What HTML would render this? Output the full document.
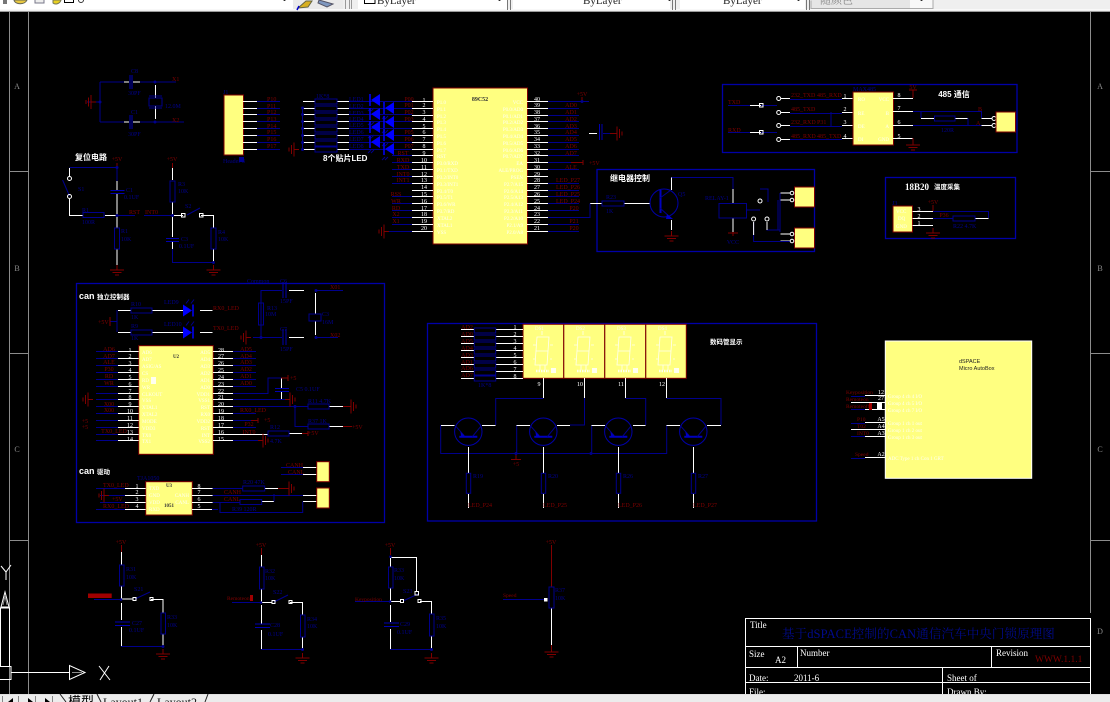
<!DOCTYPE html>
<html lang="zh">
<head>
<meta charset="utf-8">
<title>基于dSPACE控制的CAN通信汽车中央门锁原理图</title>
<style>
html,body{margin:0;padding:0;background:#000;width:1110px;height:702px;overflow:hidden}
svg{display:block}
text{font-family:"Liberation Serif","Noto Serif CJK SC",serif;font-size:6px}
.w{stroke:#fff;fill:none;stroke-width:1}
.b{stroke:#00008c;fill:none;stroke-width:1}
.r{stroke:#800000;fill:none;stroke-width:1}
.g{stroke:#8c8c8c;fill:none;stroke-width:1}
.f{stroke:#fff;fill:none;stroke-width:1}
.box{stroke:#0000a8;fill:none;stroke-width:1.3}
.y{fill:#ffff80;stroke:#800000;stroke-width:1}
.tr{fill:#800000}
.tb{fill:#00008c}
.tw{fill:#fff}
.tp{fill:#fffff0;font-size:5px}
.h{fill:#fff;font-size:8px;font-weight:bold;font-family:"Liberation Sans","Noto Sans CJK SC",sans-serif}
.n{fill:#fff;font-size:6px;text-anchor:middle}
.m{text-anchor:middle}
.e{text-anchor:end}
.tt{fill:#fff;font-size:9px}
.ui{fill:#222;font-size:11px}
</style>
</head>
<body>
<svg xmlns="http://www.w3.org/2000/svg" width="1110" height="702" viewBox="0 0 1110 702">
<defs>
<g id="gd"><path class="r" d="M0 -5V0M-7 0H7M-4.5 2.5H4.5M-2 5H2"/></g>
<g id="gl"><path class="r" d="M5 0H0M0 -7V7M-2.5 -4.5V4.5M-5 -2V2"/></g>
<g id="gr"><path class="r" d="M-5 0H0M0 -7V7M2.5 -4.5V4.5M5 -2V2"/></g>
<g id="rh"><rect x="0" y="-2.5" width="21" height="5" class="b" stroke-width="1.5"/></g>
<g id="rv"><rect x="-2.5" y="0" width="5" height="21" class="b"/></g>
<g id="led"><path d="M9 -6V6L0 0Z" fill="#0000ff"/><path d="M-1 -6V6" stroke="#0000ff" fill="none" stroke-width="1.5"/><path d="M0 8L-3 11M3 8L0 11" class="b"/></g>
<g id="led2"><path d="M0 -6V6L9 0Z" fill="#0000ff"/><path d="M10 -6V6" stroke="#0000ff" fill="none" stroke-width="1.5"/><path d="M3 -7L6 -11M8 -7L11 -11" class="b"/></g>
<g id="npn"><circle cx="0" cy="0" r="13.7" stroke="#0000a8" fill="none"/><path d="M-9 5H9" stroke="#0000c0" stroke-width="2"/><path class="b" d="M13 -6L4 5M-13 -6L-4 4"/><path d="M-8 0L-3 5L-7 5Z" fill="#0000c0"/></g>
<g id="dig"><path stroke="#fffff0" fill="none" stroke-width=".8" d="M4 12H16L15 26H3ZM3 26H15L14 40H2ZM9 6V10M0 20H3M17 20H20M0 34H2M17 34H19M7 40V45M12 40V45"/><rect x="28" y="44" width="5" height="5" fill="#fffff0" transform="translate(-10 -1)"/><path d="M3 46H16" stroke="#fffff0" stroke-width="2.5" stroke-dasharray="1.5 1"/></g>
</defs>

<rect width="1110" height="702" fill="#000"/>

<!-- top toolbar -->
<rect x="0" y="0" width="1110" height="12" fill="#efefef"/>
<rect x="0" y="0" width="293" height="9" fill="#fff"/>
<rect x="358" y="0" width="149" height="9" fill="#fff"/>
<rect x="513" y="0" width="157" height="9" fill="#fff"/>
<rect x="680" y="0" width="125" height="9" fill="#fff"/>
<rect x="811" y="0" width="99" height="8" fill="#e6e6e6"/>
<rect x="910" y="0" width="23" height="8" fill="#f8f8f8"/>
<path d="M811 .5V8.5H933V0" stroke="#aaa" fill="none"/>
<path d="M0 9.5H1110" stroke="#f8f8f8"/>
<path d="M0 11.5H1110" stroke="#9a9a9a"/>
<rect x="3" y="0" width="4" height="4" fill="#777"/>
<path d="M14 0C15 5 25 5 27 0Z" fill="#e8c840" stroke="#665"/>
<path d="M35 0V3H44V0" fill="#eee" stroke="#778"/>
<path d="M53 0V3C55 5 60 4 61 0Z" fill="#e8d020" stroke="#775"/>
<path d="M64.500 0V2.500H73.500V0" fill="#fff" stroke="#000"/>
<circle cx="81" cy="0" r="2.500" fill="none" stroke="#333"/>
<path d="M283 0H286L284.500 1Z" fill="#000"/>
<rect x="293" y="0" width="50" height="9" fill="#eaeaea"/>
<path d="M298 8L306 1H312L308 7Z" fill="#d8b020" stroke="#664"/>
<path d="M297 10L299 6" stroke="#00c" stroke-width="1.500"/>
<path d="M319 0L333 4L327 7L318 3Z" fill="#7e98c0" stroke="#556"/>
<path d="M345.500 0V9M349.500 0V9M351.500 0V9" stroke="#999"/>
<path d="M507.500 0V10M510.500 0V10M672.500 0V10M675.500 0V10M806.500 0V10M809.500 0V10" stroke="#777"/>
<path d="M364.500 0V3.500H375V0" fill="#fff" stroke="#000"/>
<text x="377" y="4" class="ui">ByLayer</text>
<text x="583" y="4" class="ui">ByLayer</text>
<text x="723" y="4" class="ui">ByLayer</text>
<text x="820" y="3.500" class="ui" fill="#777" style="fill:#888">随颜色</text>
<path d="M498 0H501L499.500 1ZM668 0H671L669.500 1ZM797 0H800L798.500 1ZM920 0H923L921.500 1Z" fill="#000"/>

<!-- drawing frame -->
<path class="g" d="M9.500 12V694M28.500 12V694M1090.500 12V613M9 171.500H28M9 353.500H28M9 540.500H28M1090 171.500H1110M1090 353.500H1110M1090 540.500H1110"/>
<g fill="#8c8c8c" style="font-size:8px">
<text x="17" y="89" class="m" fill="#8c8c8c" style="font-size:8px">A</text>
<text x="17" y="271" class="m" fill="#8c8c8c" style="font-size:8px">B</text>
<text x="17" y="452" class="m" fill="#8c8c8c" style="font-size:8px">C</text>
<text x="1100" y="89" class="m" fill="#8c8c8c" style="font-size:8px">A</text>
<text x="1100" y="271" class="m" fill="#8c8c8c" style="font-size:8px">B</text>
<text x="1100" y="452" class="m" fill="#8c8c8c" style="font-size:8px">C</text>
<text x="1100" y="634" class="m" fill="#8c8c8c" style="font-size:8px">D</text>
</g>

<!-- crystal section -->
<path class="b" d="M100 82V122M87 102H100M100 82H127M100 122H127M137 82H176M137 122H184"/>
<path class="w" d="M124 82H129M133 82H140M124 122H129M133 122H140M155.500 85V98M155.500 106V119"/>
<path d="M130 75V89M132 75V89M130 115V129M132 115V129" stroke="#0000b0" fill="none"/>
<rect x="149" y="98" width="13" height="8" class="b"/><path class="b" d="M149 96H162M149 108H162"/>
<circle cx="155" cy="82" r="1.500" fill="#00008c"/><circle cx="155" cy="122" r="1.500" fill="#00008c"/><circle cx="100" cy="102" r="1.500" fill="#00008c"/>
<use href="#gl" x="91" y="102"/>
<text x="172" y="81" class="tr">X1</text><text x="172" y="122" class="tr">X2</text>
<text x="131" y="73" class="tb">C8</text><text x="128" y="95" class="tb">30PF</text>
<text x="131" y="114" class="tb">C1</text><text x="128" y="136" class="tb">30PF</text>
<text x="165" y="108" class="tb">12.0M</text>

<!-- header -->
<rect x="224" y="95" width="19.500" height="60" class="y" stroke-width="1.400"/>
<path class="w" d="M243 101.500H257M243 108.500H257M243 114.500H257M243 121.500H257M243 128.500H257M243 135.500H257M243 142.500H257M243 149.500H257"/>
<path class="b" d="M257 101.500H280M257 108.500H280M257 114.500H280M257 121.500H280M257 128.500H280M257 135.500H280M257 142.500H280M257 149.500H280"/>
<g class="tr"><text x="267" y="101" class="tr">P10</text><text x="267" y="108" class="tr">P11</text><text x="267" y="114" class="tr">P12</text><text x="267" y="121" class="tr">P13</text><text x="267" y="128" class="tr">P14</text><text x="267" y="134" class="tr">P15</text><text x="267" y="141" class="tr">P16</text><text x="267" y="148" class="tr">P17</text></g>
<text x="223" y="94" class="tb">J1</text><text x="223" y="163" class="tb">Header 8</text>
<rect x="239" y="157" width="5" height="5" fill="#00008c"/>

<!-- resistor array / LEDs -->
<path class="w" d="M303 101.500H315M303 108.500H315M303 114.500H315M303 121.500H315M303 128.500H315M303 135.500H315M303 142.500H315M303 149.500H315M337 101.500H349M337 108.500H349M337 114.500H349M337 121.500H349M337 128.500H349M337 135.500H349M337 142.500H349M337 149.500H349"/>
<g class="b"><rect x="315" y="99" width="22" height="5" class="b"/><rect x="315" y="106" width="22" height="5" class="b"/><rect x="315" y="113" width="22" height="5" class="b"/><rect x="315" y="120" width="22" height="5" class="b"/><rect x="315" y="127" width="22" height="5" class="b"/><rect x="315" y="134" width="22" height="5" class="b"/><rect x="315" y="141" width="22" height="5" class="b"/><rect x="315" y="147" width="22" height="5" class="b"/></g>
<path class="b" d="M302.500 108V149M349 101.500H412M349 108.500H412M349 114.500H412M349 121.500H412M349 128.500H412M349 135.500H412M349 142.500H412M349 149.500H412"/>
<g fill="#00008c"><circle cx="302.500" cy="108" r="1.500"/><circle cx="302.500" cy="114.500" r="1.500"/><circle cx="302.500" cy="121.500" r="1.500"/><circle cx="302.500" cy="128.500" r="1.500"/><circle cx="302.500" cy="135.500" r="1.500"/><circle cx="302.500" cy="142.500" r="1.500"/><circle cx="302.500" cy="149.500" r="1.500"/></g>
<use href="#gl" x="294" y="149.500"/>
<text x="316" y="98" class="tb">1K*8</text>
<text x="349" y="101" class="tb">LED1</text><text x="349" y="108" class="tb">LED2</text><text x="349" y="115" class="tb">LED3</text><text x="349" y="121" class="tb">LED4</text><text x="349" y="127" class="tb">LED5</text><text x="349" y="134" class="tb">LED6</text><text x="349" y="141" class="tb">LED7</text><text x="349" y="148" class="tb">LED8</text>
<use href="#led" x="371" y="100"/><use href="#led" x="371" y="114"/><use href="#led" x="371" y="127"/><use href="#led" x="371" y="142"/>
<use href="#led" x="385" y="108"/><use href="#led" x="385" y="122"/><use href="#led" x="385" y="135"/><use href="#led" x="385" y="149"/>
<text x="323" y="161" class="h">8个贴片LED</text>

<!-- reset circuit -->
<text x="75" y="160" class="h">复位电路</text>
<text x="117" y="161" class="tr m">+5V</text>
<text x="172" y="161" class="tr m">+5V</text>
<path class="r" d="M117 163V166M172.500 163V168"/>
<path class="b" d="M69.500 167.500H117M117 167V181M62.600 180L69.500 196M117 215.500H135"/>
<path class="w" d="M69.500 168V177M69.500 199V215.500H83M105 215.500H117M117 181V190M117 194V228M117 249V265"/>
<circle cx="69.500" cy="178.500" r="2" class="f"/><circle cx="69.500" cy="196.500" r="2" class="f"/>
<path d="M110.500 190.500H124.500M110.500 193.500H124.500" stroke="#0000b0" fill="none"/>
<use href="#rh" x="83" y="215"/>
<use href="#rv" x="117" y="228"/>
<circle cx="117" cy="167.500" r="1.500" fill="#00008c"/><circle cx="117" cy="215.500" r="1.500" fill="#00008c"/>
<use href="#gd" x="117" y="270"/>
<text x="129" y="214" class="tr">RST</text>
<text x="78" y="191" class="tb">S1</text><text x="126" y="192" class="tb">C1</text><text x="124" y="199" class="tb">0.1UF</text>
<text x="82" y="212" class="tb">R1</text><text x="82" y="224" class="tb">100R</text>
<text x="121" y="233" class="tb">R1</text><text x="121" y="241" class="tb">10K</text>

<path class="w" d="M172.500 168V180M172.500 202V237M172.500 242V249M172.500 215.500H183M201 215.500H213.500V228M213.500 249V262"/>
<path class="b" d="M144 215.500H172M187 215L200 208M172.500 249V262.500H213.500"/>
<path d="M166 238.500H179M166 241.500H179" stroke="#0000b0" fill="none"/>
<use href="#rv" x="172.500" y="181"/>
<use href="#rv" x="213.500" y="228"/>
<rect x="181.500" y="213.500" width="3.500" height="3.500" class="f"/><rect x="199.500" y="213.500" width="3.500" height="3.500" class="f"/>
<circle cx="172.500" cy="215.500" r="1.500" fill="#00008c"/><circle cx="213.500" cy="262.500" r="1.500" fill="#00008c"/>
<use href="#gd" x="213.500" y="270"/>
<text x="145" y="214" class="tr">INT0</text>
<text x="178" y="186" class="tb">R3</text><text x="178" y="193" class="tb">10K</text>
<text x="185" y="208" class="tb">S2</text><text x="181" y="241" class="tb">C3</text><text x="179" y="248" class="tb">0.1UF</text>
<text x="218" y="234" class="tb">R4</text><text x="218" y="241" class="tb">10K</text>

<!-- 89C52 -->
<rect x="433" y="88" width="94.500" height="156" class="y" stroke-width="1.400"/>
<text x="480" y="101" class="m" style="font-size:6px;font-weight:bold;fill:#333">89C52</text>
<path class="w" d="M412 101.500H433M412 108.500H433M412 115.500H433M412 121.500H433M412 128.500H433M412 135.500H433M412 142.500H433M412 149.500H433M412 155.500H433M412 162.500H433M412 169.500H433M412 176.500H433M412 183.500H433M412 190.500H433M412 196.500H433M412 203.500H433M412 210.500H433M412 217.500H433M412 224.500H433M412 231.500H433"/>
<path class="b" d="M392 155.500H412M392 162.500H412M392 169.500H412M392 176.500H412M392 183.500H412M392 196.500H412M392 203.500H412M392 210.500H412M392 217.500H412M392 224.500H412M389 231.500H412"/>
<use href="#gl" x="384" y="231.500"/>
<path class="w" d="M527 101.500H548M527 108.500H548M527 115.500H548M527 121.500H548M527 128.500H548M527 135.500H548M527 142.500H548M527 149.500H548M527 155.500H548M527 162.500H548M527 169.500H548M527 176.500H548M527 183.500H548M527 190.500H548M527 196.500H548M527 203.500H548M527 210.500H548M527 217.500H548M527 224.500H548M527 231.500H548"/>
<path class="b" d="M548 101.500H589M548 108.500H579M548 115.500H579M548 121.500H579M548 128.500H579M548 135.500H579M548 142.500H579M548 149.500H579M548 155.500H579M548 162.500H571M548 169.500H579M548 183.500H579M548 190.500H579M548 196.500H579M548 203.500H579M548 210.500H579M548 224.500H579M548 231.500H579"/>
<path class="r" d="M571 162.500H583M583 160V165"/>
<g>
<text x="424" y="102" class="n">1</text><text x="424" y="107" class="n">2</text><text x="424" y="114" class="n">3</text><text x="424" y="121" class="n">4</text><text x="424" y="128" class="n">5</text><text x="424" y="134" class="n">6</text><text x="424" y="141" class="n">7</text><text x="424" y="148" class="n">8</text><text x="424" y="155" class="n">9</text><text x="424" y="162" class="n">10</text><text x="424" y="169" class="n">11</text><text x="424" y="176" class="n">12</text><text x="424" y="182" class="n">13</text><text x="424" y="189" class="n">14</text><text x="424" y="196" class="n">15</text><text x="424" y="203" class="n">16</text><text x="424" y="210" class="n">17</text><text x="424" y="216" class="n">18</text><text x="424" y="223" class="n">19</text><text x="424" y="230" class="n">20</text>
<text x="537" y="101" class="n">40</text><text x="537" y="107" class="n">39</text><text x="537" y="114" class="n">38</text><text x="537" y="121" class="n">37</text><text x="537" y="128" class="n">36</text><text x="537" y="134" class="n">35</text><text x="537" y="141" class="n">34</text><text x="537" y="148" class="n">33</text><text x="537" y="155" class="n">32</text><text x="537" y="162" class="n">31</text><text x="537" y="169" class="n">30</text><text x="537" y="176" class="n">29</text><text x="537" y="182" class="n">28</text><text x="537" y="189" class="n">27</text><text x="537" y="196" class="n">26</text><text x="537" y="203" class="n">25</text><text x="537" y="210" class="n">24</text><text x="537" y="216" class="n">23</text><text x="537" y="223" class="n">22</text><text x="537" y="230" class="n">21</text>
</g>
<g>
<text x="409" y="101" class="tr m">P00</text><text x="409" y="107" class="tr m">P01</text><text x="409" y="114" class="tr m">P02</text><text x="409" y="121" class="tr m">P03</text><text x="409" y="134" class="tr m">P05</text><text x="409" y="141" class="tr m">P06</text><text x="409" y="148" class="tr m">P07</text>
<text x="403" y="155" class="tr m">RST</text><text x="403" y="162" class="tr m">RXD</text><text x="403" y="169" class="tr m">TXD</text><text x="403" y="176" class="tr m">INT0</text><text x="403" y="182" class="tr m">INT1</text>
<text x="396" y="196" class="tr m">RSS</text><text x="396" y="203" class="tr m">WR</text><text x="396" y="210" class="tr m">RD</text><text x="396" y="216" class="tr m">X2</text><text x="396" y="223" class="tr m">X1</text>
<text x="571" y="107" class="tr m">AD0</text><text x="571" y="114" class="tr m">AD1</text><text x="571" y="121" class="tr m">AD2</text><text x="571" y="128" class="tr m">AD3</text><text x="571" y="134" class="tr m">AD4</text><text x="571" y="141" class="tr m">AD5</text><text x="571" y="148" class="tr m">AD6</text><text x="571" y="155" class="tr m">AD7</text>
<text x="571" y="169" class="tr m">ALE</text>
<text x="568" y="182" class="tr m">LED_P27</text><text x="568" y="189" class="tr m">LED_P26</text><text x="568" y="196" class="tr m">LED_P25</text><text x="568" y="203" class="tr m">LED_P24</text>
<text x="574" y="210" class="tr m">P20</text><text x="574" y="223" class="tr m">P21</text><text x="574" y="230" class="tr m">P20</text>
</g>
<g class="tp">
<text x="437" y="104" class="tp">P1.0</text><text x="437" y="111" class="tp">P1.1</text><text x="437" y="118" class="tp">P1.2</text><text x="437" y="124" class="tp">P1.3</text><text x="437" y="131" class="tp">P1.4</text><text x="437" y="138" class="tp">P1.5</text><text x="437" y="145" class="tp">P1.6</text><text x="437" y="152" class="tp">P1.7</text><text x="437" y="158" class="tp">RST</text><text x="437" y="165" class="tp">P3.0/RXD</text><text x="437" y="172" class="tp">P3.1/TXD</text><text x="437" y="179" class="tp">P3.2/INT0</text><text x="437" y="186" class="tp">P3.3/INT1</text><text x="437" y="193" class="tp">P3.4/T0</text><text x="437" y="199" class="tp">P3.5/T1</text><text x="437" y="206" class="tp">P3.6/WR</text><text x="437" y="213" class="tp">P3.7/RD</text><text x="437" y="220" class="tp">XTAL2</text><text x="437" y="227" class="tp">XTAL1</text><text x="437" y="234" class="tp">VSS</text>
<text x="523" y="104" class="tp e">VCC</text><text x="523" y="111" class="tp e">P0.0/AD0</text><text x="523" y="118" class="tp e">P0.1/AD1</text><text x="523" y="124" class="tp e">P0.2/AD2</text><text x="523" y="131" class="tp e">P0.3/AD3</text><text x="523" y="138" class="tp e">P0.4/AD4</text><text x="523" y="145" class="tp e">P0.5/AD5</text><text x="523" y="152" class="tp e">P0.6/AD6</text><text x="523" y="158" class="tp e">P0.7/AD7</text><text x="523" y="165" class="tp e">EA</text><text x="523" y="172" class="tp e">ALE/PROG</text><text x="523" y="179" class="tp e">PSEN</text><text x="523" y="186" class="tp e">P2.7/A15</text><text x="523" y="193" class="tp e">P2.6/A14</text><text x="523" y="199" class="tp e">P2.5/A13</text><text x="523" y="206" class="tp e">P2.4/A12</text><text x="523" y="213" class="tp e">P2.3/A11</text><text x="523" y="220" class="tp e">P2.2/A10</text><text x="523" y="227" class="tp e">P2.1/A9</text><text x="523" y="234" class="tp e">P2.0/A8</text>
</g>
<text x="582" y="96" class="tr m">+5V</text><path class="r" d="M582 97V101"/><circle cx="582" cy="101.500" r="1.500" fill="#00008c"/>
<text x="589" y="165" class="tr">+5V</text>
<path class="w" d="M589 133.500H597"/><path d="M599.500 124V140M602 124V140" stroke="#0000b0" fill="none"/><path class="b" d="M603 133.500H610"/>
<use href="#gr" x="617" y="133.500"/>
<path class="r" d="M610 133.500H617"/>

<!-- 485 -->
<rect x="722.500" y="84.500" width="294.500" height="68" class="box"/>
<text x="954" y="97" class="h m">485 通信</text>
<text x="728" y="104" class="tr">TXD</text><text x="728" y="132" class="tr">RXD</text>
<path class="b" d="M728 105.500H750M761 105.500H777M728 132.500H750M761 132.500H777"/>
<path class="w" d="M750 105.500H761M750 132.500H761M781 98.500H790M781 112.500H790M781 125.500H790M781 139.500H790"/>
<rect x="759.500" y="103.500" width="3.500" height="3.500" class="f"/><rect x="759.500" y="130.500" width="3.500" height="3.500" class="f"/>
<circle cx="778.700" cy="98.500" r="2" class="f"/><circle cx="778.700" cy="112.500" r="2" class="f"/><circle cx="778.700" cy="125.500" r="2" class="f"/><circle cx="778.700" cy="139.500" r="2" class="f"/>
<path class="b" d="M790 99.500H842M790 113.500H842M790 126.500H842M790 139.500H842M831 112V126"/>
<path class="w" d="M842 98.500H853M842 112.500H853M842 125.500H853M842 138.500H853"/>
<rect x="853" y="92" width="40.500" height="53" class="y"/>
<text x="791" y="97" class="tr">232_TXD</text><text x="817" y="97" class="tr">485_RXD</text><text x="791" y="111" class="tr">485_TXD</text><text x="791" y="124" class="tr">232_RXD</text><text x="817" y="124" class="tr">P31</text><text x="791" y="138" class="tr">485_RXD</text><text x="817" y="138" class="tr">485_TXD</text>
<text x="845" y="98" class="n">1</text><text x="845" y="111" class="n">2</text><text x="845" y="124" class="n">3</text><text x="845" y="138" class="n">4</text>
<text x="899" y="97" class="n">8</text><text x="899" y="110" class="n">7</text><text x="899" y="124" class="n">6</text><text x="899" y="138" class="n">5</text>
<text x="853" y="91" class="tb">MAX485</text>
<text x="858" y="101" class="tp">RO</text><text x="858" y="115" class="tp">RE</text><text x="858" y="128" class="tp">DE</text><text x="858" y="141" class="tp">DI</text>
<text x="889" y="101" class="tp e">VCC</text><text x="889" y="115" class="tp e">B</text><text x="889" y="128" class="tp e">A</text><text x="889" y="141" class="tp e">GND</text>
<path class="w" d="M893 98.500H913M893 111.500H913M893 125.500H913M893 138.500H913M921 118.500H934M955 118.500H968M981.500 118.500H992M981.500 125.500H992"/>
<path class="b" d="M913 111.500H981.500V118M913 125.500H981.500M921 111V118M968 118V125"/>
<path class="r" d="M913 90V98M909 90H917M913 138V145"/>
<rect x="934.500" y="116" width="20.500" height="5" class="b"/>
<use href="#gd" x="913" y="145"/>
<text x="913" y="89" class="tr m">5V</text><text x="978" y="111" class="tr">B</text><text x="976" y="125" class="tr">A</text><text x="941" y="132" class="tb">120R</text>
<circle cx="994" cy="118.500" r="2" class="f"/><circle cx="994" cy="125.500" r="2" class="f"/>
<rect x="996" y="112" width="19.500" height="20" class="y"/>

<!-- 18B20 -->
<rect x="885.500" y="177.500" width="130" height="61" class="box"/>
<text x="905" y="190" class="tt" style="font-size:9px;font-weight:bold">18B20</text>
<text x="934" y="189" class="h" style="font-size:6.500px">温度采集</text>
<rect x="893" y="206" width="19.500" height="26" class="y"/>
<text x="892" y="205" class="tb">J3</text>
<path class="w" d="M912.500 211.500H933M912.500 218.500H933M912.500 225.500H933M975 218.500H988.500"/>
<path class="b" d="M933 211.500H988.500V218M933 218.500H953"/>
<rect x="953" y="216" width="22" height="5" class="b"/>
<path class="r" d="M933 205V211"/>
<use href="#gd" x="933" y="233"/>
<text x="933" y="204" class="tr m">+5V</text><text x="944" y="217" class="tr m">P36</text>
<text x="919" y="211" class="n">3</text><text x="919" y="218" class="n">2</text><text x="919" y="225" class="n">1</text>
<text x="953" y="228" class="tb">R22  4.7K</text>
<text x="896" y="213" class="tp">VCC</text><text x="898" y="220" class="tp">DQ</text><text x="896" y="228" class="tp">GND</text>

<!-- relay -->
<rect x="597" y="169.500" width="217.500" height="82" class="box"/>
<text x="610" y="181" class="h">继电器控制</text>
<path class="w" d="M590 203.500H602M624 203.500H650M671.500 177V190M671.500 220V230M733 189V203M733 218V232M780.500 193H790M780.500 200H790M780.500 234H790M780.500 241H790"/>
<path class="b" d="M548 217.500H590V203.500M671.500 177.500H733V189M760 189H768V202M753.600 222V241.500H790M767 222V230H780M780 193V232M778 200V230M746 210H760"/>
<rect x="602" y="201" width="22" height="5" class="b"/>
<circle cx="664" cy="203" r="14" stroke="#0000a8" fill="none"/>
<path d="M660.500 190V213" stroke="#0000c0" stroke-width="2"/>
<path class="b" d="M660 198L671 190M660 208L671 218"/><path d="M667 214L673 219L666 219Z" fill="#0000c0"/>
<rect x="719" y="203.500" width="27.500" height="14.500" class="b" stroke="#00008c"/>
<path class="w" d="M753.600 222V235M767 222V230"/>
<circle cx="760" cy="201" r="2" class="f"/><circle cx="753.600" cy="219" r="2" class="f"/><circle cx="767" cy="219" r="2" class="f"/>
<path class="r" d="M728 233H738M733 232V236"/>
<use href="#gd" x="671.500" y="236"/>
<text x="733" y="244" class="tb m">VCC</text>
<text x="705" y="200" class="tb">RELAY-1</text>
<text x="606" y="199" class="tb">R23</text><text x="606" y="213" class="tb">1K</text><text x="678" y="196" class="tb">Q5</text>
<rect x="794.500" y="187" width="20" height="20" class="y"/>
<rect x="794.500" y="228" width="20" height="20" class="y"/>
<circle cx="792" cy="193" r="1.800" class="f"/><circle cx="792" cy="200" r="1.800" class="f"/><circle cx="792" cy="234" r="1.800" class="f"/><circle cx="792" cy="241" r="1.800" class="f"/>

<!-- CAN box -->
<rect x="76.500" y="283.500" width="308" height="239" class="box"/>
<text x="79" y="299" class="h" style="font-size:9px">can</text><text x="97" y="299" class="h" style="font-size:6.500px">独立控制器</text>
<path class="w" d="M118 310.500H131M152 310.500H183M200 310.500H212.500M118 332.500H131M152 332.500H183M200 332.500H212.500"/>
<path class="b" d="M117 310V332M110 321.500H117"/><path class="r" d="M110 317V326"/>
<rect x="131" y="308" width="21" height="5" class="b"/><rect x="131" y="330" width="21" height="5" class="b"/>
<use href="#led2" x="183" y="310.500"/><use href="#led2" x="183" y="332.500"/>
<text x="98" y="324" class="tr">+5V</text><text x="213" y="310" class="tr">RX0_LED</text><text x="213" y="330" class="tr">TX0_LED</text>
<text x="164" y="304" class="tb">LED9</text><text x="164" y="326" class="tb">LED10</text>
<text x="131" y="306" class="tb">R10</text><text x="131" y="319" class="tb">1K</text><text x="131" y="328" class="tb">R9</text><text x="131" y="340" class="tb">1K</text>
<path class="b" d="M261 290V337M261 290.500H282M316 290.500H343M261 337.500H282M316 337.500H338M253 337.500H261"/>
<path class="w" d="M289 290.500H304M289 337.500H304M315.500 293V314M315.500 321V335"/>
<path d="M283 282V298M286 282V298M283 329V345M286 329V345" stroke="#0000b0" fill="none"/>
<rect x="258.500" y="303" width="5" height="22" class="b"/>
<rect x="309" y="314" width="12" height="7" class="b"/>
<circle cx="316" cy="290.500" r="1.500" fill="#00008c"/><circle cx="316" cy="337.500" r="1.500" fill="#00008c"/><circle cx="261" cy="337.500" r="1.500" fill="#00008c"/>
<use href="#gl" x="246" y="337.500"/>
<text x="247" y="283" class="tb">Common</text><text x="280" y="283" class="tb">C6</text><text x="280" y="303" class="tb">15PF</text><text x="280" y="331" class="tb">C7</text><text x="280" y="351" class="tb">15PF</text>
<text x="267" y="310" class="tb">R13</text><text x="265" y="316" class="tb">10M</text><text x="322" y="316" class="tb">C3</text><text x="322" y="324" class="tb">16M</text>
<text x="330" y="289" class="tr">X01</text><text x="330" y="337" class="tr">X02</text>

<rect x="138.700" y="345.700" width="74.600" height="108.600" class="y"/>
<text x="176" y="358" class="m" style="fill:#333;font-size:5px;font-weight:bold">U2</text>
<path class="w" d="M118 351.500H138.700M118 358.500H138.700M118 365.500H138.700M118 372.500H138.700M118 379.500H138.700M118 386.500H138.700M118 393.500H138.700M118 399.500H138.700M118 406.500H138.700M118 413.500H138.700M118 420.500H138.700M118 427.500H138.700M118 434.500H138.700M118 440.500H138.700"/>
<path class="b" d="M96 351.500H118M96 358.500H118M96 365.500H118M96 372.500H118M96 379.500H118M96 386.500H118M96 393.500H118M96 399.500H118M96 406.500H118M96 413.500H118M96 420.500H118M96 427.500H118M96 434.500H118M96 440.500H118"/>
<path class="w" d="M213 351.500H233M213 358.500H233M213 365.500H233M213 372.500H233M213 379.500H233M213 386.500H233M213 393.500H233M213 399.500H233M213 406.500H233M213 413.500H233M213 420.500H233M213 427.500H233M213 434.500H268M213 440.500H233"/>
<path class="b" d="M233 351.500H256M233 358.500H256M233 365.500H256M233 372.500H256M233 379.500H256M233 386.500H256M233 393.500H268V378H281M233 399.500H290M233 406.500H308M295 406.500V426.500H308M233 413.500H256M233 420.500H256M233 427.500H256M233 440.500H258"/>
<path class="w" d="M281.500 378V388M281.500 391V399M289 433.500H302M329 406.500H343M329 426.500H343"/>
<path d="M275 388.500H289M275 391.500H289" stroke="#0000b0" fill="none"/>
<rect x="308" y="404" width="21" height="5" class="b"/><rect x="308" y="424" width="21" height="5" class="b"/><rect x="268" y="431" width="21" height="5" class="b"/>
<circle cx="295" cy="406.500" r="1.500" fill="#00008c"/>
<path class="r" d="M281 378H288M288 375V381M343 406.500H350M343 426.500H352M302 433.500H308M308 431V436M251 420.500H258M258 418V423"/>
<use href="#gr" x="351" y="406.500"/><use href="#gr" x="290" y="399.500"/><use href="#gr" x="263" y="440.500"/>
<use href="#gl" x="88" y="399.500"/>
<g>
<text x="130" y="352" class="n">1</text><text x="130" y="358" class="n">2</text><text x="130" y="365" class="n">3</text><text x="130" y="372" class="n">4</text><text x="130" y="379" class="n">5</text><text x="130" y="386" class="n">6</text><text x="130" y="393" class="n">7</text><text x="130" y="399" class="n">8</text><text x="130" y="406" class="n">9</text><text x="130" y="413" class="n">10</text><text x="130" y="420" class="n">11</text><text x="130" y="427" class="n">12</text><text x="130" y="434" class="n">13</text><text x="130" y="441" class="n">14</text>
<text x="221" y="352" class="n">28</text><text x="221" y="358" class="n">27</text><text x="221" y="365" class="n">26</text><text x="221" y="372" class="n">25</text><text x="221" y="379" class="n">24</text><text x="221" y="386" class="n">23</text><text x="221" y="393" class="n">22</text><text x="221" y="399" class="n">21</text><text x="221" y="406" class="n">20</text><text x="221" y="413" class="n">19</text><text x="221" y="420" class="n">18</text><text x="221" y="427" class="n">17</text><text x="221" y="434" class="n">16</text><text x="221" y="441" class="n">15</text>
</g>
<g>
<text x="109" y="351" class="tr m">AD6</text><text x="109" y="358" class="tr m">AD7</text><text x="109" y="364" class="tr m">ALE</text><text x="109" y="371" class="tr m">P30</text><text x="109" y="378" class="tr m">RD</text><text x="109" y="385" class="tr m">WR</text><text x="109" y="406" class="tr m">X00</text><text x="109" y="412" class="tr m">X00</text><text x="85" y="423" class="tr m">+5</text><text x="85" y="429" class="tr m">+5</text><text x="114" y="433" class="tr m">TX0_LED</text>
<text x="246" y="351" class="tr m">AD5</text><text x="246" y="358" class="tr m">AD4</text><text x="246" y="364" class="tr m">AD3</text><text x="246" y="371" class="tr m">AD2</text><text x="246" y="378" class="tr m">AD1</text><text x="246" y="385" class="tr m">AD0</text><text x="253" y="412" class="tr m">RX0_LED</text><text x="249" y="426" class="tr m">P32</text><text x="249" y="434" class="tr m">INT0</text>
<text x="290" y="380" class="tr">+5</text><text x="264" y="422" class="tr">+5</text><text x="308" y="435" class="tr">+5V</text><text x="352" y="429" class="tr">+5V</text>
</g>
<text x="296" y="391" class="tb">C5  0.1UF</text><text x="308" y="403" class="tb">R11 4.7K</text><text x="308" y="423" class="tb">R37 1K</text><text x="270" y="429" class="tb">R12</text><text x="270" y="443" class="tb">4.7K</text>
<g class="tp"><text x="142" y="354" class="tp">AD6</text><text x="142" y="361" class="tp">AD7</text><text x="142" y="368" class="tp">ASIG/AS</text><text x="142" y="375" class="tp">CS</text><text x="142" y="382" class="tp">RD</text><text x="142" y="389" class="tp">WR</text><text x="142" y="396" class="tp">CLKOUT</text><text x="142" y="402" class="tp">VSS</text><text x="142" y="409" class="tp">XTAL1</text><text x="142" y="416" class="tp">XTAL2</text><text x="142" y="423" class="tp">MODE</text><text x="142" y="430" class="tp">VDD3</text><text x="142" y="437" class="tp">TX0</text><text x="142" y="443" class="tp">TX1</text>
<text x="210" y="354" class="tp e">AD5</text><text x="210" y="361" class="tp e">AD4</text><text x="210" y="368" class="tp e">AD3</text><text x="210" y="375" class="tp e">AD2</text><text x="210" y="382" class="tp e">AD1</text><text x="210" y="389" class="tp e">AD0</text><text x="210" y="396" class="tp e">VDD1</text><text x="210" y="402" class="tp e">VSS1</text><text x="210" y="409" class="tp e">RST</text><text x="210" y="416" class="tp e">RX0</text><text x="210" y="423" class="tp e">VDD2</text><text x="210" y="430" class="tp e">RST</text><text x="210" y="437" class="tp e">INT</text><text x="210" y="443" class="tp e">VSS2</text></g>
<rect x="151" y="377" width="5" height="7" fill="#fffff0"/>

<text x="79" y="474" class="h" style="font-size:9px">can</text><text x="97" y="474" class="h" style="font-size:6.500px">驱动</text>
<rect x="145.700" y="481.700" width="46.600" height="33.300" class="y"/>
<path class="w" d="M125 488.500H145.700M125 495.500H145.700M125 502.500H145.700M125 509.500H145.700M192 488.500H212.700M192 495.500H212.700M192 502.500H212.700M192 509.500H212.700M264.700 488.500H278M261.700 501.500H274M303 495.500H316.700M303 501.500H316.700M303 467.500H316.700M303 474.500H316.700"/>
<path class="b" d="M96 488.500H125M96 509.500H125M212.700 488.500H242.700M212.700 495.500H303M212.700 502.500H240M212 509.500H218M220 502.500V512.500H302.700V501.500M274 494V501.500M281 467.500H303M281 474.500H303M100 495.500H125M100 502.500H125"/>
<rect x="242.700" y="486" width="22" height="5" class="b"/><rect x="240" y="499.500" width="21.700" height="5" class="b"/>
<path class="r" d="M278 488.500H284"/>
<use href="#gr" x="289" y="488.500"/><use href="#gl" x="104" y="495.500"/>
<rect x="316.700" y="461.700" width="12.600" height="20" class="y"/><rect x="316.700" y="488" width="12.600" height="20" class="y"/>
<text x="286" y="467" class="tr">CANH</text><text x="288" y="474" class="tr">CANL</text>
<text x="103" y="487" class="tr">TX0_LED</text><text x="103" y="508" class="tr">RX0_LED</text><text x="112" y="501" class="tr">+5V</text><text x="224" y="494" class="tr">CANH</text><text x="224" y="501" class="tr">CANL</text>
<text x="137" y="488" class="n">1</text><text x="137" y="494" class="n">2</text><text x="137" y="501" class="n">3</text><text x="137" y="508" class="n">4</text>
<text x="199" y="488" class="n">8</text><text x="199" y="494" class="n">7</text><text x="199" y="501" class="n">6</text><text x="199" y="508" class="n">5</text>
<text x="169" y="487" class="m" style="fill:#333;font-size:5px;font-weight:bold">U3</text>
<text x="169" y="507" class="m" style="fill:#333;font-size:5px;font-weight:bold">1051</text>
<text x="137" y="480" class="tb">TJA1050</text>
<text x="243" y="484" class="tb">R20  47K</text><text x="232" y="511" class="tb">R39  120R</text>
<text x="149" y="490" class="tp">TXD</text><text x="149" y="497" class="tp">GND</text><text x="149" y="504" class="tp">VDD</text><text x="149" y="511" class="tp">RXD</text>
<text x="189" y="497" class="tp e">CANH</text><text x="189" y="504" class="tp e">CANL</text>

<!-- digit section -->
<rect x="427.500" y="323.500" width="389" height="197.500" class="box"/>
<rect x="523" y="324.300" width="163.300" height="54" class="y" stroke="#a05000"/>
<path d="M563.700 324V378M604.700 324V378M645.700 324V378" stroke="#800000" stroke-width="1.200"/>
<path class="w" d="M461 329.500H474M461 336.500H474M461 343.500H474M461 350.500H474M461 357.500H474M461 364.500H474M461 371.500H474M461 378.500H474M495.700 329.500H523M495.700 336.500H523M495.700 343.500H523M495.700 350.500H523M495.700 357.500H523M495.700 364.500H523M495.700 371.500H523M495.700 378.500H523"/>
<g><rect x="474.300" y="328" width="21.400" height="5" class="b"/><rect x="474.300" y="335" width="21.400" height="5" class="b"/><rect x="474.300" y="342" width="21.400" height="5" class="b"/><rect x="474.300" y="349" width="21.400" height="5" class="b"/><rect x="474.300" y="356" width="21.400" height="5" class="b"/><rect x="474.300" y="363" width="21.400" height="5" class="b"/><rect x="474.300" y="370" width="21.400" height="5" class="b"/><rect x="474.300" y="376" width="21.400" height="5" class="b"/></g>
<text x="467" y="329" class="tr m">AD2</text><text x="467" y="336" class="tr m">AD0</text><text x="467" y="343" class="tr m">AD5</text><text x="467" y="350" class="tr m">AD4</text><text x="467" y="357" class="tr m">AD3</text><text x="467" y="364" class="tr m">AD1</text><text x="467" y="370" class="tr m">AD6</text><text x="467" y="377" class="tr m">AD7</text>
<text x="515" y="329" class="n">1</text><text x="515" y="336" class="n">2</text><text x="515" y="343" class="n">3</text><text x="515" y="350" class="n">4</text><text x="515" y="357" class="n">5</text><text x="515" y="364" class="n">6</text><text x="515" y="371" class="n">7</text><text x="515" y="378" class="n">8</text>
<text x="478" y="387" class="tb">1K*8</text>
<text x="535" y="330" class="tp">DS1</text><text x="576" y="330" class="tp">DS2</text><text x="617" y="330" class="tp">DS3</text><text x="658" y="330" class="tp">DS4</text>
<use href="#dig" x="533" y="325"/><use href="#dig" x="574" y="325"/><use href="#dig" x="615" y="325"/><use href="#dig" x="656" y="325"/>
<text x="710" y="344" class="h" style="font-size:6.500px">数码管显示</text>
<path class="w" d="M543.500 378V398M584.500 378V398M625.500 378V398M666.500 378V398"/>
<text x="539" y="386" class="n">9</text><text x="580" y="386" class="n">10</text><text x="621" y="386" class="n">11</text><text x="662" y="386" class="n">12</text>
<path class="b" d="M543.500 398.500H495.700V425M584.500 398V425H570M625.500 398.500H645.700V425M666.500 398.500H721V425M440.700 425V453.500H666.700V425M516.700 425V453M591.700 425V453"/>
<path class="w" d="M441 425.500H454.500M482 425.500H495.500M516.500 425.500H530M557 425.500H570M591.500 425.500H605M633 425.500H645.500M666.500 425.500H680M707 425.500H721"/>
<use href="#npn" x="468.300" y="431.700"/><use href="#npn" x="543.300" y="431.700"/><use href="#npn" x="618.300" y="431.700"/><use href="#npn" x="693.300" y="431.700"/>
<path class="w" d="M468.500 447V473M543.500 447V473M618.500 447V473M693.500 447V473M468.500 494V508M543.500 494V508M618.500 494V508M693.500 494V508"/>
<rect x="466.300" y="473.300" width="4.400" height="20" class="b"/><rect x="541.300" y="473.300" width="4.400" height="20" class="b"/><rect x="616.300" y="473.300" width="4.400" height="20" class="b"/><rect x="691.300" y="473.300" width="4.400" height="20" class="b"/>
<text x="473" y="478" class="tb">R19</text><text x="548" y="478" class="tb">R20</text><text x="623" y="478" class="tb">R26</text><text x="698" y="478" class="tb">R27</text>
<text x="468" y="507" class="tr">LED_P24</text><text x="543" y="507" class="tr">LED_P25</text><text x="618" y="507" class="tr">LED_P26</text><text x="693" y="507" class="tr">LED_P27</text>
<circle cx="516" cy="453.500" r="1.500" fill="#00008c"/><circle cx="591" cy="453.500" r="1.500" fill="#00008c"/>
<path class="r" d="M516 455V459M511 459.500H521"/><text x="516" y="466" class="tr m">+5</text>

<!-- dSPACE -->
<rect x="885.300" y="341" width="146.400" height="137.300" fill="#ffff80" stroke="#fff"/>
<text x="959" y="363" style="fill:#222;font-size:5.500px;font-family:'Liberation Sans',sans-serif">dSPACE</text>
<text x="959" y="370" style="fill:#222;font-size:5.500px;font-family:'Liberation Sans',sans-serif">Micro AutoBox</text>
<path class="w" d="M865 395.500H885M851 402.500H885M865 409.500H885M865 422.500H885M851 429.500H885M865 436.500H885M865 457.500H885"/>
<path class="b" d="M851 396.500H865M851 409.500H865M851 423.500H865M851 436.500H865M851 458.500H865"/>
<rect x="877" y="403" width="5" height="6" fill="#fff"/><rect x="869" y="403" width="3" height="7" fill="#a00000"/>
<text x="846" y="394" class="tr" style="font-size:5.500px">Keyposition</text><text x="846" y="401" class="tr" style="font-size:5.500px">Remoteon</text><text x="846" y="408" class="tr" style="font-size:5.500px">Remoteoff</text>
<text x="857" y="421" class="tr" style="font-size:5.500px">P10</text><text x="857" y="428" class="tr" style="font-size:5.500px">T02</text><text x="857" y="435" class="tr" style="font-size:5.500px">INT0</text><text x="855" y="456" class="tr" style="font-size:5.500px">Speed</text>
<text x="881" y="394" class="n">12</text><text x="881" y="400" class="n">27</text><text x="881" y="421" class="n">A5</text><text x="881" y="428" class="n">A4</text><text x="881" y="435" class="n">A3</text><text x="881" y="456" class="n">A2</text>
<g><text x="888" y="398" class="tp">Group 4 ch 4 I/O</text><text x="888" y="405" class="tp">Group 4 ch 5 I/O</text><text x="888" y="412" class="tp">Group 4 ch 7 I/O</text><text x="888" y="425" class="tp">Group 1 ch 1 out</text><text x="888" y="432" class="tp">Group 1 ch 2 out</text><text x="888" y="439" class="tp">Group 1 ch 3 out</text><text x="888" y="460" class="tp">ADC Type 1 ch Con 1 GRT</text></g>

<!-- bottom circuits -->
<text x="121" y="544" class="tr m">+5V</text><path class="r" d="M121.500 545V552"/>
<path class="w" d="M121.500 552V565M121.500 586V599M121.500 599H133M151 599.500H163V613M163 634V646.500M121.500 603V620M121.500 627V646"/>
<path class="b" d="M94 599.500H121M135 599L150 592M121 646.500H163"/>
<rect x="119.500" y="565" width="4.500" height="21" class="b"/><rect x="161" y="613" width="4.500" height="21" class="b"/>
<path d="M115 622H130M115 625.500H130" stroke="#0000b0" fill="none"/>
<rect x="88" y="593.500" width="23.700" height="4.500" fill="#a00000"/>
<rect x="133" y="597.500" width="3" height="3" class="f"/><rect x="150" y="597.500" width="3" height="3" class="f"/>
<circle cx="121" cy="599.500" r="1.300" fill="#00008c"/><circle cx="163" cy="646.500" r="1.500" fill="#00008c"/>
<use href="#gd" x="163" y="654"/>
<text x="126" y="571" class="tb">R31</text><text x="126" y="579" class="tb">10K</text><text x="134" y="591" class="tb">S21</text><text x="132" y="625" class="tb">C27</text><text x="129" y="632" class="tb">0.1UF</text><text x="167" y="619" class="tb">R33</text><text x="167" y="627" class="tb">10K</text>

<text x="261" y="547" class="tr m">+5V</text><path class="r" d="M261.500 548V555"/>
<path class="w" d="M261.500 555V567M261.500 589V602M261.500 602.500H272M290 602.500H302.500V615M302.500 637V649M261.500 605V624M261.500 630V649"/>
<path class="b" d="M232 602.500H261M274 602L288 595M261 649.500H302"/>
<rect x="259.500" y="567" width="4.500" height="22" class="b"/><rect x="300.500" y="615" width="4.500" height="22" class="b"/>
<path d="M255 624H270M255 627.500H270" stroke="#0000b0" fill="none"/>
<rect x="272" y="600.500" width="3" height="3" class="f"/><rect x="289" y="600.500" width="3" height="3" class="f"/>
<circle cx="261" cy="602.500" r="1.300" fill="#00008c"/><circle cx="302.500" cy="649.500" r="1.500" fill="#00008c"/>
<use href="#gd" x="302.500" y="658"/>
<text x="227" y="600" class="tr" style="font-size:5.500px">Remoteon</text><rect x="250" y="595" width="3" height="6" fill="#a00000"/>
<text x="265" y="573" class="tb">R32</text><text x="265" y="580" class="tb">10K</text><text x="273" y="594" class="tb">S22</text><text x="270" y="627" class="tb">C28</text><text x="268" y="636" class="tb">0.1UF</text><text x="307" y="621" class="tb">R34</text><text x="307" y="628" class="tb">10K</text>

<text x="390" y="547" class="tr m">+5V</text><path class="r" d="M390.500 548V555"/>
<path class="w" d="M390.500 556V567M390.500 588V601M390.500 601.500H401M420 601.500H431.500V614M431.500 636V649M390.500 605V622M390.500 629V649M390.500 557.500H416.500V592"/>
<path class="b" d="M355 601.500H390M403 601L418 594M390 649.500H431"/>
<rect x="388.500" y="567" width="4.500" height="21" class="b"/><rect x="429.500" y="614" width="4.500" height="22" class="b"/>
<path d="M384 623H399M384 626.500H399" stroke="#0000b0" fill="none"/>
<rect x="400.500" y="599.500" width="3" height="3" class="f"/><rect x="418" y="599.500" width="3" height="3" class="f"/><rect x="415" y="591.500" width="3.500" height="3.500" class="f"/>
<circle cx="390.500" cy="556.700" r="1.300" fill="#00008c"/><circle cx="390" cy="601.500" r="1.300" fill="#00008c"/><circle cx="431.500" cy="649.500" r="1.500" fill="#00008c"/>
<use href="#gd" x="431.500" y="658"/>
<text x="355" y="601" class="tr" style="font-size:5.500px">Keyposition</text>
<text x="394" y="572" class="tb">R33</text><text x="394" y="580" class="tb">10K</text><text x="403" y="593" class="tb">S23</text><text x="400" y="626" class="tb">C29</text><text x="397" y="634" class="tb">0.1UF</text><text x="436" y="620" class="tb">R35</text><text x="436" y="628" class="tb">10K</text>

<text x="551" y="544" class="tr m">+5V</text><path class="r" d="M551.500 545V587M551.500 645V650"/>
<path class="w" d="M551.500 608V645"/>
<rect x="549" y="587" width="5" height="21" class="b"/>
<path class="b" d="M503 599.500H544"/>
<rect x="544" y="598" width="3.500" height="3.500" fill="#fff"/>
<use href="#gd" x="551.500" y="652"/>
<text x="503" y="597" class="tr" style="font-size:5.500px">Speed</text>
<text x="555" y="592" class="tb">R37</text><text x="555" y="600" class="tb">10K</text>

<!-- UCS icon -->
<path class="f" d="M1 566L6 572L11 565M6 572V580"/>
<path class="f" d="M.5 608V666M9.500 608V666M0 608H10M5 592L1 607H9Z"/>
<path class="g" d="M3 605L5 596L7 605"/>
<rect x="-1" y="666.500" width="12" height="13" class="f"/>
<path class="f" d="M11 672.500H69M69.500 665.500V679.500L85 672.500Z"/>
<path class="g" d="M72 672.500H82"/>
<path class="f" d="M99 666L110 680M109 666L100 680"/>

<!-- title block -->
<path class="f" d="M745.500 694V618.500H1090.500V694M745.500 646.500H1090.500M745.500 667.500H1090.500M745.500 682.500H1090.500M797.500 646.500V667.500M991.500 646.500V667.500M942.500 667.500V694"/>
<text x="750" y="628" class="tt">Title</text>
<text x="782" y="638" style="fill:#000a8c;font-size:12.500px;letter-spacing:0.100px">基于dSPACE控制的CAN通信汽车中央门锁原理图</text>
<text x="749" y="657" class="tt">Size</text><text x="775" y="663" class="tt">A2</text><text x="800" y="656" class="tt">Number</text>
<text x="996" y="656" class="tt">Revision</text><text x="1035" y="662" style="fill:#800000;font-size:9.500px">WWW.1.1.1</text>
<text x="749" y="681" class="tt">Date:</text><text x="794" y="681" class="tt">2011-6</text><text x="947" y="681" class="tt">Sheet   of</text>
<text x="749" y="695" class="tt">File:</text><text x="947" y="695" class="tt">Drawn By:</text>

<!-- bottom tab bar -->
<rect x="0" y="694" width="1110" height="8" fill="#ececec"/>
<path d="M0 694.500H1110" stroke="#e0e0e0"/>
<path d="M2.500 696V702M18.500 696V702M35.500 696V702M52.500 696V702" stroke="#888"/>
<path d="M13 698L8 702H13ZM28 698L33 702H28ZM45 698L50 702H45Z" fill="#000"/>
<path d="M60 694L66 702M97 694L101 702M150 702L154 694M205 702L208 694" stroke="#222" fill="none"/>
<text x="68" y="706" style="fill:#000;font-size:13px;font-family:'Liberation Sans','Noto Sans CJK SC',sans-serif">模型</text>
<text x="103" y="706" style="fill:#111;font-size:12px">Layout1</text>
<text x="157" y="706" style="fill:#111;font-size:12px">Layout2</text>
</svg>
</body>
</html>
